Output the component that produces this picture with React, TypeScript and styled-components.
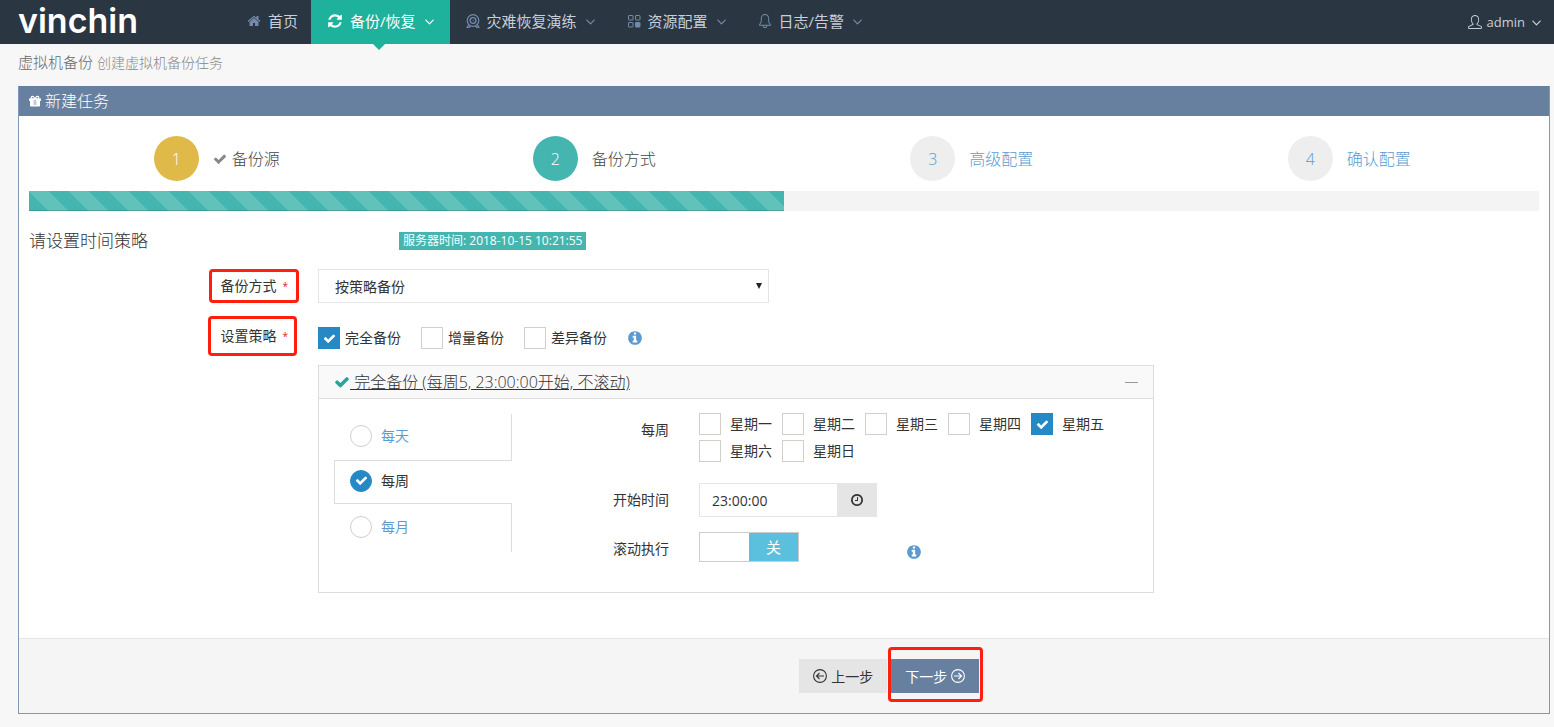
import React, { useState } from "react";
import styled, { createGlobalStyle, css } from "styled-components";
import { SlBell, SlUser } from "react-icons/sl";

const GlobalStyle = createGlobalStyle`
  *, *::before, *::after { box-sizing: border-box; }
  body {
    margin: 0;
    background: #f7f7f7;
    color: #333;
    font-family: "Open Sans", "Noto Sans CJK SC", sans-serif;
    font-size: 14px;
    line-height: 20px;
  }
  button, input, select { font-family: inherit; }
  h1, h2, h3, p, ul, ol { margin: 0; padding: 0; font-weight: 300; }
  ul, ol { list-style: none; }
`;

const glyphs = {
  home: "M1472 992v480q0 26-19 45t-45 19h-384v-384h-256v384h-384q-26 0-45-19t-19-45v-480q0-1 .5-3t.5-3l575-474 575 474q1 2 1 6zm223-69l-62 74q-8 9-21 11h-3q-13 0-21-7l-692-577-692 577q-12 8-24 7-13-2-21-11l-62-74q-8-10-7-23.5t11-21.5l719-599q32-26 76-26t76 26l244 204v-195q0-14 9-23t23-9h192q14 0 23 9t9 23v408l219 182q10 8 11 21.5t-7 23.5z",
  refresh:
    "M1639 1056q0 5-1 7-64 268-268 434.5t-478 166.5q-146 0-282.5-55t-243.5-157l-129 129q-19 19-45 19t-45-19-19-45v-448q0-26 19-45t45-19h448q26 0 45 19t19 45-19 45l-137 137q71 66 161 102t187 36q134 0 250-65t186-179q11-17 53-117 8-23 30-23h192q13 0 22.5 9.5t9.5 22.5zm25-800v448q0 26-19 45t-45 19h-448q-26 0-45-19t-19-45 19-45l138-138q-148-137-349-137-134 0-250 65t-186 179q-11 17-53 117-8 23-30 23h-199q-13 0-22.5-9.5t-9.5-22.5v-7q65-268 270-434.5t480-166.5q146 0 284 55.5t245 156.5l130-129q19-19 45-19t45 19 19 45z",
  check:
    "M1671 566q0 40-28 68l-724 724-136 136q-28 28-68 28t-68-28l-136-136-362-362q-28-28-28-68t28-68l136-136q28-28 68-28t68 28l294 295 656-657q28-28 68-28t68 28l136 136q28 28 28 68z",
  info: "M1152 1376v-160q0-14-9-23t-23-9h-96v-512q0-14-9-23t-23-9h-320q-14 0-23 9t-9 23v160q0 14 9 23t23 9h96v320h-96q-14 0-23 9t-9 23v160q0 14 9 23t23 9h448q14 0 23-9t9-23zm-128-896v-160q0-14-9-23t-23-9h-192q-14 0-23 9t-9 23v160q0 14 9 23t23 9h192q14 0 23-9t9-23zm640 416q0 209-103 385.5t-279.5 279.5-385.5 103-385.5-103-279.5-279.5-103-385.5 103-385.5 279.5-279.5 385.5-103 385.5 103 279.5 279.5 103 385.5z",
  clock:
    "M1024 544v448q0 14-9 23t-23 9h-320q-14 0-23-9t-9-23v-64q0-14 9-23t23-9h224v-352q0-14 9-23t23-9h64q14 0 23 9t9 23zm416 352q0-148-73-273t-198-198-273-73-273 73-198 198-73 273 73 273 198 198 273 73 273-73 198-198 73-273zm224 0q0 209-103 385.5t-279.5 279.5-385.5 103-385.5-103-279.5-279.5-103-385.5 103-385.5 279.5-279.5 385.5-103 385.5 103 279.5 279.5 103 385.5z",
  angle:
    "M1395 736q0 13-10 23l-466 466q-10 10-23 10t-23-10l-466-466q-10-10-10-23t10-23l50-50q10-10 23-10t23 10l393 393 393-393q10-10 23-10t23 10l50 50q10 10 10 23z",
};

const IconSvg = styled.svg`
  display: block;
  flex: none;
`;

const Glyph = ({ name, size = 14 }: { name: keyof typeof glyphs; size?: number }) => (
  <IconSvg width={size} height={size} viewBox="0 0 1792 1792" fill="currentColor" aria-hidden="true">
    <path d={glyphs[name]} />
  </IconSvg>
);

const WebcamIcon = () => (
  <IconSvg width="14" height="14" viewBox="0 0 14 14" fill="none" stroke="currentColor" strokeWidth="1.200" aria-hidden="true">
    <circle cx="7" cy="6.500" r="5.800" />
    <circle cx="7" cy="6.500" r="2.900" strokeWidth="1.400" />
    <circle cx="7" cy="6.500" r=".6" fill="currentColor" stroke="none" />
    <path d="M2.600 10.500 1.200 13.400h2l1.400-1.600M11.400 10.500l1.400 2.900h-2l-1.400-1.600" />
  </IconSvg>
);

const BlocksIcon = () => (
  <IconSvg width="14" height="14" viewBox="0 0 14 14" fill="none" stroke="currentColor" aria-hidden="true">
    <rect x="1.500" y="1.500" width="4.500" height="4.500" rx=".5" />
    <rect x="8.500" y="1.500" width="4.500" height="4.500" rx=".5" />
    <rect x="1.500" y="8.500" width="4.500" height="4.500" rx=".5" />
    <rect x="8.500" y="8.500" width="4.500" height="4.500" rx=".5" fill="currentColor" />
  </IconSvg>
);

const GiftIcon = () => (
  <IconSvg width="12" height="12" viewBox="0 0 12 12" fill="currentColor" aria-hidden="true">
    <path
      fillRule="evenodd"
      d="M6 3C5.300 1.700 4.600.8 3.500.8a1.700 1.700 0 0 0-1.600 2.500H.6a.5.5 0 0 0-.5.500V6h.9v4.700c0 .4.300.7.700.7h8.600c.4 0 .7-.3.7-.7V6h.9V3.800a.5.5 0 0 0-.5-.5h-1.300A1.700 1.700 0 0 0 8.500.8C7.400.8 6.700 1.700 6 3zM3.500 1.900c.5 0 .9.500 1.400 1.400H3.500a.7.700 0 0 1 0-1.400zm5 0a.7.700 0 0 1 0 1.400H7.100c.5-.9.900-1.400 1.400-1.400zM4.800 4.700h.6v5.300h-.6zm1.800 0h.6v5.300h-.6z"
    />
  </IconSvg>
);

const ArrowCircle = ({ back = false }: { back?: boolean }) => (
  <IconSvg width="14" height="14" viewBox="0 0 14 14" fill="none" stroke="currentColor" strokeWidth="1.1" aria-hidden="true">
    <circle cx="7" cy="7" r="6.400" />
    <path d={back ? "M11 7H3.500M6.500 4 3.500 7l3 3" : "M3 7h7.500M7.500 4l3 3-3 3"} />
  </IconSvg>
);

const CaretSvg = styled(IconSvg)`
  margin: 0 3px 0 2px;
`;

const Caret = () => (
  <CaretSvg width="9" height="9" viewBox="384 384 1024 1024" fill="currentColor" aria-hidden="true">
    <path d={glyphs.angle} />
  </CaretSvg>
);

const Header = styled.header`
  display: flex;
  align-items: stretch;
  height: 44px;
  padding: 0 10px 0 18px;
  background: #2b3643;
`;

const Logo = styled.a`
  width: 213px;
  color: #fff;
  font-family: Inter, sans-serif;
  font-size: 34px;
  font-weight: 600;
  line-height: 42px;
  text-decoration: none;
`;

const Nav = styled.nav`
  display: flex;
  flex: 1;
`;

const NavLink = styled.a<{ $active?: boolean }>`
  position: relative;
  display: flex;
  align-items: center;
  gap: 7px;
  padding: 0 13px 2px 16px;
  font-size: 15px;
  color: ${(p) => (p.$active ? "#fff" : "#c6cfda")};
  background: ${(p) => (p.$active ? "#1eb19b" : "transparent")};
  text-decoration: none;
  white-space: nowrap;
  svg { color: ${(p) => (p.$active ? "#fff" : "#738aaa")}; }
  ${(p) =>
    p.$active &&
    css`
      &::after {
        content: "";
        position: absolute;
        top: 100%;
        left: 50%;
        margin-left: -7px;
        border: 6px solid transparent;
        border-top-color: #1eb19b;
        border-bottom: 0;
      }
    `}
`;

const UserMenu = styled.button`
  display: flex;
  align-items: center;
  gap: 5px;
  padding: 0;
  border: 0;
  background: none;
  color: #c6cfda;
  font-size: 13px;
`;

const PageTitle = styled.h1`
  padding: 7px 18px 13px;
  color: #666;
  font-size: 15px;
  line-height: 22px;
  height: 42px;
  small { color: #888; font-size: 14px; }
`;

const Portlet = styled.main`
  margin: 0 4px 13px 18px;
  border: 1px solid #8097b5;
  border-top: 0;
  background: #fff;
`;

const PortletTitle = styled.h2`
  display: flex;
  align-items: center;
  gap: 4px;
  height: 30px;
  padding: 0 10px;
  background: #67809f;
  color: #fff;
  font-size: 16px;
`;

const FormBody = styled.div`
  padding: 20px 10px 45px;
`;

const Steps = styled.ol`
  display: grid;
  grid-template-columns: repeat(4, 1fr);
`;

const Step = styled.li<{ $state: "done" | "active" | "todo" }>`
  display: flex;
  align-items: center;
  justify-content: center;
  gap: 14px;
  height: 45px;
  padding-right: 2px;
  font-size: 16px;
  font-weight: 300;
  color: ${(p) => (p.$state === "todo" ? "#5b9bd1" : "#444")};
`;

const StepNumber = styled.span<{ $state: "done" | "active" | "todo" }>`
  display: grid;
  place-items: center;
  width: 45px;
  height: 45px;
  border-radius: 50%;
  color: ${(p) => (p.$state === "todo" ? "#5b9bd1" : "#fff")};
  background: ${(p) => ({ done: "#dfba49", active: "#45b6af", todo: "#eee" })[p.$state]};
`;

const StepLabel = styled.span`
  display: flex;
  align-items: center;
  gap: 5px;
  svg { color: #888; }
`;

const Progress = styled.div`
  height: 20px;
  margin: 10px 0 17px;
  background: #f4f4f4;
`;

const ProgressBar = styled.div`
  width: 50%;
  height: 100%;
  background: #45b6af
    linear-gradient(
      45deg,
      rgba(255, 255, 255, 0.15) 25%,
      transparent 25%,
      transparent 50%,
      rgba(255, 255, 255, 0.15) 50%,
      rgba(255, 255, 255, 0.15) 75%,
      transparent 75%
    )
    0 0 / 40px 40px;
  box-shadow: inset 0 -1px 0 rgba(0, 0, 0, 0.15);
`;

const SectionHead = styled.div`
  display: grid;
  grid-template-columns: 370px 1fr;
  align-items: center;
  height: 26px;
  margin-bottom: 15px;
`;

const SectionTitle = styled.h3`
  font-size: 17px;
  line-height: 24px;
`;

const ServerTime = styled.span`
  justify-self: start;
  padding: 0 4px;
  background: #45b6af;
  color: #fff;
  font-size: 12px;
  line-height: 18px;
`;

const FormRow = styled.div`
  display: grid;
  grid-template-columns: 270px minmax(0, 836px);
  column-gap: 19px;
  align-items: start;
`;

const Marked = styled.div<{ $tall?: boolean }>`
  position: relative;
  justify-self: end;
  display: flex;
  align-items: center;
  height: ${(p) => (p.$tall ? 40 : 34)}px;
  margin-right: ${(p) => (p.$tall ? 2 : 0)}px;
  padding: ${(p) => (p.$tall ? "0 9px 0 12px" : "0 11px")};
  &::after {
    content: "";
    position: absolute;
    inset: 0;
    border: 3px solid #ff1f0f;
    border-radius: 4px;
    pointer-events: none;
  }
`;

const Required = styled.span`
  margin-left: 6px;
  color: #e02222;
  font-size: 10px;
`;

const SelectWrap = styled.div`
  display: grid;
  align-items: center;
  max-width: 451px;
  margin-bottom: 13px;
  &::after {
    content: "";
    grid-area: 1 / 1;
    justify-self: end;
    margin-right: 7px;
    border: 3px solid transparent;
    border-top: 6px solid #222;
    border-bottom: 0;
    pointer-events: none;
  }
`;

const Select = styled.select`
  grid-area: 1 / 1;
  appearance: none;
  width: 100%;
  height: 34px;
  padding: 0 16px;
  border: 1px solid #e5e5e5;
  border-radius: 0;
  background: #fff;
  color: #333;
  font-size: 14px;
`;

const Options = styled.div`
  display: flex;
  align-items: center;
  gap: 20px;
  height: 44px;
  margin-bottom: 5px;
`;

const Choice = styled.label<{ $gap: number; $link?: boolean }>`
  display: flex;
  align-items: center;
  gap: ${(p) => p.$gap}px;
  color: ${(p) => (p.$link ? "#5b9bd1" : "#333")};
  white-space: nowrap;
`;

const Box = styled.span`
  display: grid;
  place-items: center;
  color: #fff;
  > * { grid-area: 1 / 1; }
  svg { pointer-events: none; }
`;

const BoxInput = styled.input`
  appearance: none;
  width: 22px;
  height: 22px;
  margin: 0;
  border: 1px solid #d2cfc8;
  border-radius: ${(p) => (p.type === "radio" ? "50%" : "0")};
  background: #fff;
  &:checked { border-color: #2489c5; background: #2489c5; }
`;

const Info = styled.span`
  color: #5b9bd1;
`;

const StrategyPanel = styled.section`
  margin-left: 289px;
  max-width: 836px;
  border: 1px solid #ddd;
`;

const StrategyHead = styled.div`
  display: flex;
  align-items: center;
  justify-content: space-between;
  height: 33px;
  padding: 0 15px;
  border-bottom: 1px solid #ddd;
  background: #f9f9f9;
`;

const StrategyLink = styled.a`
  display: flex;
  align-items: center;
  color: #333;
  font-size: 16px;
  font-weight: 300;
  text-decoration: underline;
  white-space: pre;
  svg { color: #26a69a; }
`;

const Collapse = styled.button`
  width: 13px;
  height: 13px;
  padding: 0;
  border: 0;
  background: linear-gradient(#999, #999) center / 100% 1px no-repeat;
`;

const StrategyBody = styled.div`
  display: grid;
  grid-template-columns: 178px 157px minmax(0, 1fr);
  padding: 14px 15px 20px;
`;

const Tabs = styled.div`
  display: flex;
  flex-direction: column;
  padding-top: 1px;
`;

const Tab = styled.div<{ $active: boolean }>`
  display: flex;
  align-items: center;
  height: 46px;
  padding: 0 0 3px 16px;
  ${(p) =>
    p.$active
      ? css`
          height: 44px;
          padding-left: 15px;
          border: 1px solid #ddd;
          border-right: 0;
        `
      : css`
          border-right: 1px solid #ddd;
        `}
  &:last-child { height: 48px; }
`;

const Fields = styled.div`
  display: grid;
  grid-column: 2 / 4;
  grid-template-columns: 157px minmax(0, 1fr);
  column-gap: 30px;
  row-gap: 15px;
  align-items: start;
`;

const FieldLabel = styled.label`
  line-height: 34px;
  text-align: right;
`;

const Days = styled.div`
  display: flex;
  flex-wrap: wrap;
  gap: 5px 10px;
  padding-bottom: 6px;
  max-width: 415px;
`;

const TimeGroup = styled.div`
  display: flex;
  width: 178px;
`;

const TimeInput = styled.input`
  flex: 1;
  min-width: 0;
  height: 34px;
  padding: 0 12px;
  border: 1px solid #e5e5e5;
  border-right: 0;
  background: #fff;
  color: #333;
  font-size: 14px;
`;

const TimeButton = styled.button`
  display: grid;
  place-items: center;
  width: 40px;
  padding: 0;
  border: 0;
  background: #e5e5e5;
  color: #333;
`;

const RollingRow = styled.div`
  display: flex;
  align-items: center;
  gap: 107px;
  height: 40px;
`;

const Toggle = styled.label`
  display: grid;
  grid-template-columns: 1fr 1fr;
  align-self: flex-start;
  width: 100px;
  height: 30px;
  border: 1px solid #ccc;
  background: #fff;
`;

const ToggleInput = styled.input`
  appearance: none;
  margin: 0;
`;

const ToggleState = styled.span`
  background: #5bc0de;
  color: #fff;
  font-size: 15px;
  line-height: 28px;
  text-align: center;
`;

const Actions = styled.footer`
  display: flex;
  gap: 4px;
  padding: 20px 0 20px 51%;
  border-top: 1px solid #e5e5e5;
  background: #f5f5f5;
`;

const ActionButton = styled.button<{ $primary?: boolean }>`
  position: relative;
  display: flex;
  align-items: center;
  gap: 4px;
  height: 34px;
  padding: 0 14px;
  border: 0;
  background: ${(p) => (p.$primary ? "#67809f" : "#e5e5e5")};
  color: ${(p) => (p.$primary ? "#fff" : "#333")};
  font-size: 14px;
  ${(p) =>
    p.$primary &&
    css`
      &::after {
        content: "";
        position: absolute;
        inset: -12px -4px -9px -3px;
        border: 3px solid #ff1f0f;
        border-radius: 4px;
      }
    `}
`;

type ChoiceProps = {
  label: string;
  type?: "checkbox" | "radio";
  name?: string;
  initial?: boolean;
  checked?: boolean;
  onSelect?: () => void;
  gap?: number;
};

const Choose = ({ label, type = "checkbox", name, initial = false, checked, onSelect, gap = 9 }: ChoiceProps) => {
  const [own, setOwn] = useState(initial);
  const on = checked ?? own;
  return (
    <Choice $gap={gap} $link={type === "radio" && !on}>
      <Box>
        <BoxInput type={type} name={name} checked={on} onChange={() => (onSelect ? onSelect() : setOwn(!own))} />
        {on && <Glyph name="check" size={13} />}
      </Box>
      {label}
    </Choice>
  );
};

const steps = [
  { label: "备份源", state: "done" },
  { label: "备份方式", state: "active" },
  { label: "高级配置", state: "todo" },
  { label: "确认配置", state: "todo" },
] as const;

const days = ["星期一", "星期二", "星期三", "星期四", "星期五", "星期六", "星期日"];

export default function App() {
  const [cycle, setCycle] = useState("每周");
  const [rolling, setRolling] = useState(false);
  return (
    <>
      <GlobalStyle />
      <Header>
        <Logo href="#">vinchin</Logo>
        <Nav>
          <NavLink href="#"><Glyph name="home" />首页</NavLink>
          <NavLink href="#" $active><Glyph name="refresh" size={16} />备份/恢复<Caret /></NavLink>
          <NavLink href="#"><WebcamIcon />灾难恢复演练<Caret /></NavLink>
          <NavLink href="#"><BlocksIcon />资源配置<Caret /></NavLink>
          <NavLink href="#"><SlBell size={14} />日志/告警<Caret /></NavLink>
        </Nav>
        <UserMenu type="button"><SlUser size={14} />admin<Caret /></UserMenu>
      </Header>
      <PageTitle>虚拟机备份 <small>创建虚拟机备份任务</small></PageTitle>
      <Portlet>
        <PortletTitle><GiftIcon />新建任务</PortletTitle>
        <FormBody>
          <Steps>
            {steps.map((s, i) => (
              <Step key={s.label} $state={s.state}>
                <StepNumber $state={s.state}>{i + 1}</StepNumber>
                <StepLabel>{s.state === "done" && <Glyph name="check" />}{s.label}</StepLabel>
              </Step>
            ))}
          </Steps>
          <Progress><ProgressBar /></Progress>
          <SectionHead>
            <SectionTitle>请设置时间策略</SectionTitle>
            <ServerTime>服务器时间: 2018-10-15 10:21:55</ServerTime>
          </SectionHead>
          <FormRow>
            <Marked><label htmlFor="mode">备份方式</label><Required>*</Required></Marked>
            <SelectWrap>
              <Select id="mode"><option>按策略备份</option></Select>
            </SelectWrap>
          </FormRow>
          <FormRow>
            <Marked $tall><span id="strategy">设置策略</span><Required>*</Required></Marked>
            <Options role="group" aria-labelledby="strategy">
              <Choose label="完全备份" gap={5} initial />
              <Choose label="增量备份" gap={5} />
              <Choose label="差异备份" gap={5} />
              <Info><Glyph name="info" size={16} /></Info>
            </Options>
          </FormRow>
          <StrategyPanel>
            <StrategyHead>
              <StrategyLink href="#"><Glyph name="check" size={16} /> 完全备份 (每周5, 23:00:00开始, 不滚动)</StrategyLink>
              <Collapse type="button" aria-label="收起" />
            </StrategyHead>
            <StrategyBody>
              <Tabs role="radiogroup">
                {["每天", "每周", "每月"].map((c) => (
                  <Tab key={c} $active={c === cycle}>
                    <Choose type="radio" name="cycle" label={c} checked={c === cycle} onSelect={() => setCycle(c)} />
                  </Tab>
                ))}
              </Tabs>
              <Fields>
                <FieldLabel as="span" id="weekly">每周</FieldLabel>
                <Days role="group" aria-labelledby="weekly">
                  {days.map((d) => <Choose key={d} label={d} initial={d === "星期五"} />)}
                </Days>
                <FieldLabel htmlFor="start">开始时间</FieldLabel>
                <TimeGroup>
                  <TimeInput id="start" type="text" defaultValue="23:00:00" />
                  <TimeButton type="button" aria-label="选择时间"><Glyph name="clock" /></TimeButton>
                </TimeGroup>
                <FieldLabel htmlFor="rolling">滚动执行</FieldLabel>
                <RollingRow>
                  <Toggle>
                    <ToggleInput id="rolling" type="checkbox" role="switch" checked={rolling} onChange={() => setRolling(!rolling)} />
                    <ToggleState>{rolling ? "开" : "关"}</ToggleState>
                  </Toggle>
                  <Info><Glyph name="info" size={16} /></Info>
                </RollingRow>
              </Fields>
            </StrategyBody>
          </StrategyPanel>
        </FormBody>
        <Actions>
          <ActionButton type="button"><ArrowCircle back />上一步</ActionButton>
          <ActionButton type="button" $primary>下一步<ArrowCircle /></ActionButton>
        </Actions>
      </Portlet>
    </>
  );
}
